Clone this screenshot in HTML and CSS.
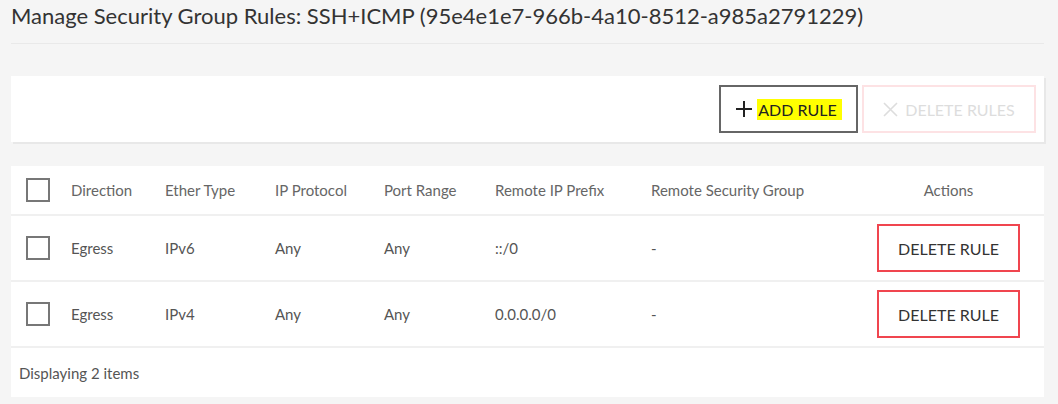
FILE: index.html
```html
<!DOCTYPE html>
<html>
<head>
<meta charset="utf-8">
<link rel="stylesheet" href="styles.css">
</head>
<body>
<div class="page">
  <h1 class="title">Manage Security Group Rules: SSH+ICMP (95e4e1e7-966b-4a10-8512-a985a2791229)</h1>
  <div class="toolbar">
    <button class="btn btn-add">
      <svg class="ico" width="18" height="18" viewBox="0 0 18 18"><path d="M9 1v16M1 9h16" stroke="#222" stroke-width="2" fill="none"/></svg>
      <span class="hl">ADD RULE</span>
    </button>
    <button class="btn btn-del-all">
      <svg class="ico" width="15" height="15" viewBox="0 0 15 15"><path d="M1 1l13 13M14 1L1 14" stroke="#ddd" stroke-width="1.6" fill="none"/></svg>
      <span>DELETE RULES</span>
    </button>
  </div>
  <div class="table">
    <div class="row head">
      <div class="cell cb-cell"><span class="cb"></span></div>
      <div class="cell">Direction</div>
      <div class="cell">Ether Type</div>
      <div class="cell">IP Protocol</div>
      <div class="cell">Port Range</div>
      <div class="cell">Remote IP Prefix</div>
      <div class="cell">Remote Security Group</div>
      <div class="cell actions">Actions</div>
    </div>
    <div class="row">
      <div class="cell cb-cell"><span class="cb"></span></div>
      <div class="cell">Egress</div>
      <div class="cell">IPv6</div>
      <div class="cell">Any</div>
      <div class="cell">Any</div>
      <div class="cell">::/0</div>
      <div class="cell">-</div>
      <div class="cell actions"><button class="btn btn-del">DELETE RULE</button></div>
    </div>
    <div class="row">
      <div class="cell cb-cell"><span class="cb"></span></div>
      <div class="cell">Egress</div>
      <div class="cell">IPv4</div>
      <div class="cell">Any</div>
      <div class="cell">Any</div>
      <div class="cell">0.0.0.0/0</div>
      <div class="cell">-</div>
      <div class="cell actions"><button class="btn btn-del">DELETE RULE</button></div>
    </div>
    <div class="footer">Displaying 2 items</div>
  </div>
</div>
</body>
</html>
```

FILE: styles.css
```css
* { box-sizing: border-box; }
html, body { margin: 0; padding: 0; }
body {
  background: #f5f5f5;
  font-family: "Lato", "Open Sans", sans-serif;
  color: #333;
  width: 1058px;
  height: 404px;
  overflow: hidden;
}
.page {
  padding: 0 14px 0 11px;
}
.title {
  margin: 0;
  font-size: 22px;
  font-weight: 400;
  color: #333;
  height: 44px;
  line-height: 32px;
  border-bottom: 1px solid #e9e9e9;
}
.toolbar {
  margin-top: 32px;
  background: #fff;
  height: 66px;
  display: flex;
  justify-content: flex-end;
  align-items: center;
  gap: 4px;
  padding-right: 8px;
  box-shadow: 2px 2px 0 #e8e8e8;
}
.btn {
  font-family: inherit;
  background: #fff;
  height: 48px;
  font-size: 16px;
  display: flex;
  align-items: center;
  justify-content: center;
  cursor: pointer;
  padding: 0;
}
.btn-add {
  width: 139px;
  border: 2px solid #666;
  color: #222;
  gap: 4px;
}
.hl {
  background: #ffff00;
  padding: 1px 5px 1px 1px;
}
.btn-del-all {
  width: 174px;
  border: 2px solid #fde2e4;
  color: #ddd;
  gap: 7px;
}
.table {
  margin-top: 24px;
  background: #fff;
}
.row {
  display: grid;
  grid-template-columns: 60px 94px 110px 109px 111px 156px 202px 1fr;
  height: 66px;
  align-items: center;
  border-bottom: 2px solid #f0f0f0;
  font-size: 15px;
  color: #555;
}
.row.head {
  height: 50px;
  color: #666;
}
.cb-cell {
  padding-left: 15px;
  display: flex;
}
.cb {
  width: 24px;
  height: 24px;
  border: 2px solid #777;
  display: block;
}
.actions {
  display: flex;
  justify-content: center;
}
.btn-del {
  width: 143px;
  border: 2px solid #f0454f;
  color: #333;
  font-size: 16px;
}
.footer {
  height: 49px;
  display: flex;
  align-items: center;
  padding-left: 8px;
  font-size: 15px;
  color: #555;
}
```
